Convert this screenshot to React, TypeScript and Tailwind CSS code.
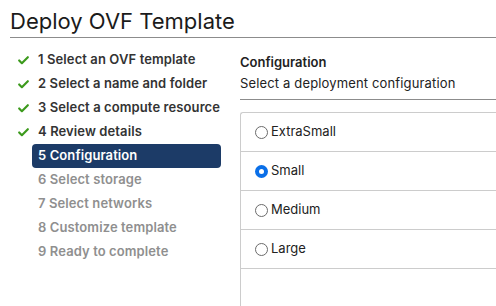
import { Check } from "lucide-react";

const steps = [
  { n: 1, label: "Select an OVF template", state: "done" },
  { n: 2, label: "Select a name and folder", state: "done" },
  { n: 3, label: "Select a compute resource", state: "done" },
  { n: 4, label: "Review details", state: "done" },
  { n: 5, label: "Configuration", state: "active" },
  { n: 6, label: "Select storage", state: "todo" },
  { n: 7, label: "Select networks", state: "todo" },
  { n: 8, label: "Customize template", state: "todo" },
  { n: 9, label: "Ready to complete", state: "todo" },
];

const configs = ["ExtraSmall", "Small", "Medium", "Large"];

function Radio({ checked }: { checked: boolean }) {
  if (checked) {
    return (
      <span className="w-[13px] h-[13px] rounded-full bg-[#0a6fe8] flex items-center justify-center shrink-0">
        <span className="w-[5px] h-[5px] rounded-full bg-white" />
      </span>
    );
  }
  return <span className="w-[13px] h-[13px] rounded-full border border-[#6b6b6b] bg-white shrink-0" />;
}

export default function App() {
  return (
    <div className="w-[496px] h-[306px] overflow-hidden bg-white text-[#313131] font-['Inter',sans-serif]">
      <div className="ml-[10px] h-[38px] border-b border-[#8c8c8c] flex items-end pb-[5px]">
        <h1 className="text-[22px] leading-none text-[#1b1b1b]">Deploy OVF Template</h1>
      </div>

      <div className="flex">
        <ul className="w-[240px] shrink-0 pt-[10px]">
          {steps.map((s) => (
            <li key={s.n} className="relative h-[24px] flex items-center">
              {s.state === "done" && (
                <Check className="absolute left-[17px] top-[6px] w-[13px] h-[13px] text-[#3c9a1c]" strokeWidth={4} />
              )}
              <div
                className={
                  s.state === "active"
                    ? "ml-[32px] w-[189px] h-[24px] pl-[6px] rounded-[4px] bg-[#1c3b67] text-white flex items-center text-[13px] font-semibold tracking-[0.1px]"
                    : s.state === "done"
                    ? "ml-[32px] pl-[6px] text-[13px] font-semibold text-[#333] tracking-[0.1px]"
                    : "ml-[32px] pl-[6px] text-[13px] font-semibold text-[#8f8f8f] tracking-[0.1px]"
                }
              >
                {s.n} {s.label}
              </div>
            </li>
          ))}
        </ul>

        <div className="flex-1 pt-[14px]">
          <div className="border-b border-[#8c8c8c] pb-[6px]">
            <div className="text-[13px] leading-[20px] font-semibold text-[#222]">Configuration</div>
            <div className="text-[13px] leading-[20px] mt-[1px] text-[#222] tracking-[0.15px]">Select a deployment configuration</div>
          </div>
          <div className="mt-[12px] h-[200px] border-l border-t border-[#cccccc] rounded-tl-[3px]">
            {configs.map((c) => (
              <div key={c} className="h-[39px] border-b border-[#cccccc] flex items-center pl-[14px] gap-[3px]">
                <Radio checked={c === "Small"} />
                <span className="text-[13px] text-[#222]">{c}</span>
              </div>
            ))}
          </div>
        </div>
      </div>
    </div>
  );
}
